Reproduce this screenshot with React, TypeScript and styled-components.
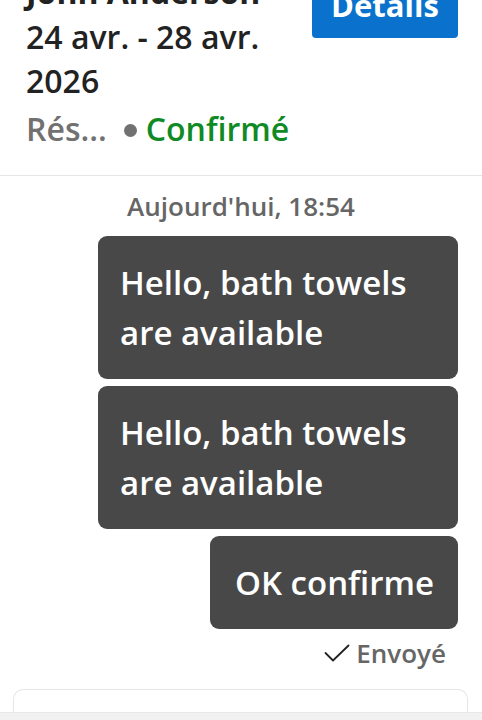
import styled, { createGlobalStyle } from 'styled-components'

const Global = createGlobalStyle`
	html, body {
		margin: 0;
		padding: 0;
		background: #ffffff;
		font-family: "Open Sans", "Noto Sans", sans-serif;
		overflow: hidden;
	}
`

const Page = styled.div`
	width: 482px;
	height: 720px;
	display: flex;
	flex-direction: column;
	overflow: hidden;
`

const Header = styled.header`
	display: flex;
	justify-content: space-between;
	align-items: flex-start;
	margin-top: -32px;
	padding: 0 24px 24px 26px;
	border-bottom: 1.5px solid #e6e6e6;
`

const Info = styled.div`
	display: flex;
	flex-direction: column;
	width: 268px;
	color: #222;
	font-size: 32px;
`

const Name = styled.div`
	font-weight: 700;
	line-height: 47px;
	white-space: nowrap;
`

const Dates = styled.div`
	font-weight: 600;
	line-height: 44px;
`

const Status = styled.div`
	display: flex;
	align-items: center;
	font-weight: 600;
	line-height: 44px;
	margin-top: 4px;
`

const Muted = styled.span`
	color: #717171;
`

const Dot = styled.span`
	width: 13px;
	height: 13px;
	border-radius: 50%;
	background: #717171;
	margin: 2px 9px 0 17px;
`

const Green = styled.span`
	color: #0f8a24;
`

const DetailsButton = styled.button`
	background: #0a72cc;
	color: #fff;
	border: none;
	border-radius: 4px;
	font-family: inherit;
	font-size: 31px;
	font-weight: 700;
	width: 146px;
	height: 70px;
	line-height: 40px;
	padding: 17px 0 0 0;
	display: flex;
	justify-content: center;
	align-items: flex-start;
`

const Thread = styled.section`
	display: flex;
	flex-direction: column;
	align-items: flex-end;
	padding: 13px 24px 0 24px;
	gap: 7px;
`

const Stamp = styled.div`
	align-self: center;
	font-size: 26px;
	font-weight: 600;
	color: #666;
	line-height: 34px;
	margin-bottom: 6px;
`

const Bubble = styled.div<{ $wide?: boolean }>`
	background: #484848;
	color: #fff;
	border-radius: 9px;
	font-size: 33px;
	font-weight: 600;
	line-height: 50px;
	padding: ${p => (p.$wide ? '22px 23px 21px 22px' : '22px 24px 21px 25px')};
	width: ${p => (p.$wide ? '360px' : 'auto')};
	box-sizing: border-box;
`

const Sent = styled.div`
	display: flex;
	align-items: center;
	gap: 6px;
	font-size: 26px;
	font-weight: 600;
	color: #666;
	padding-right: 12px;
	line-height: 34px;
`

const Composer = styled.div`
	margin: 19px 14px 0 13px;
	height: 22px;
	border: 1.5px solid #e6e6e6;
	border-bottom: none;
	border-radius: 10px 10px 0 0;
`

const BottomBar = styled.div`
	flex: 1;
	background: #f1f1f1;
	border-top: 1px solid #e8e8e8;
`

export default function App() {
	return (
		<Page>
			<Global />
			<Header>
				<Info>
					<Name>John Anderson</Name>
					<Dates>24 avr. - 28 avr. 2026</Dates>
					<Status>
						<Muted>Rés...</Muted>
						<Dot />
						<Green>Confirmé</Green>
					</Status>
				</Info>
				<DetailsButton>Details</DetailsButton>
			</Header>
			<Thread>
				<Stamp>Aujourd'hui, 18:54</Stamp>
				<Bubble $wide>Hello, bath towels are available</Bubble>
				<Bubble $wide>Hello, bath towels are available</Bubble>
				<Bubble>OK confirme</Bubble>
				<Sent>
					<svg width="26" height="18" viewBox="0 0 26 18" fill="none">
						<path d="M1.5 9 L9 16.5 L24.5 1.5" stroke="#222" strokeWidth="1.8" strokeLinecap="round" strokeLinejoin="round" />
					</svg>
					Envoyé
				</Sent>
			</Thread>
			<Composer />
			<BottomBar />
		</Page>
	)
}
